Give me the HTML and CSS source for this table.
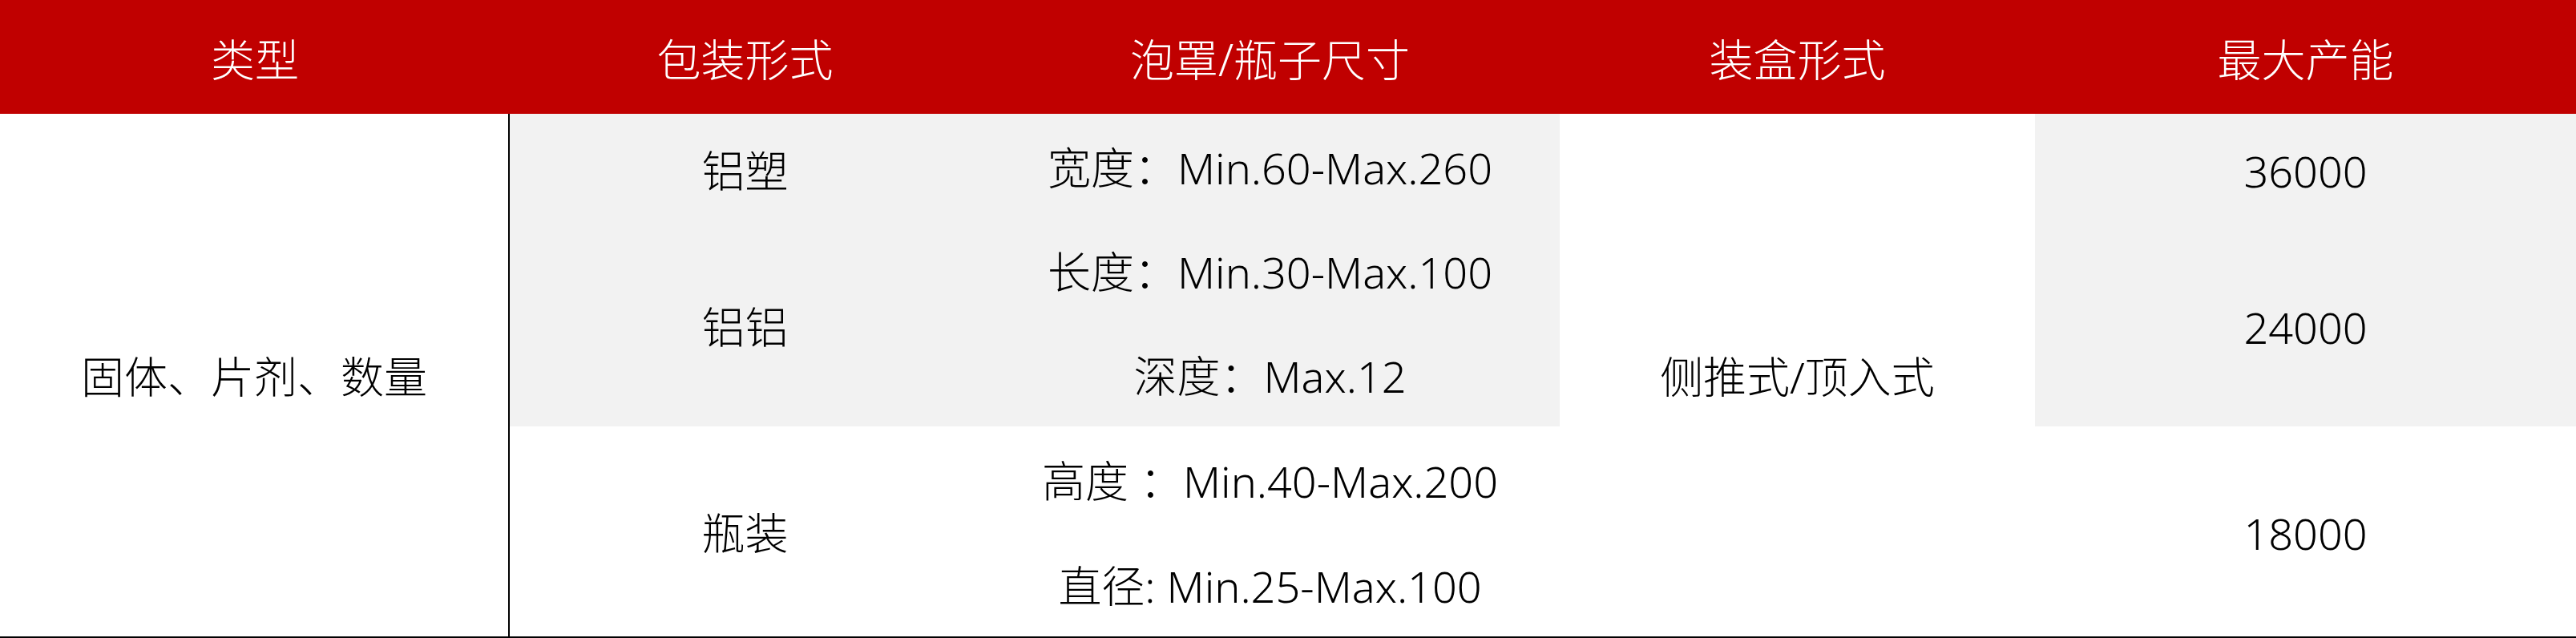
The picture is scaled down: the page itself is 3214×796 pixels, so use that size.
FILE: index.html
```html
<!DOCTYPE html>
<html lang="zh-CN">
<head>
<meta charset="utf-8">
<title>规格表</title>
<link rel="stylesheet" href="styles.css">
</head>
<body>
<div class="table">
  <div class="head">
    <div class="hcell c1">类型</div>
    <div class="hcell c2">包装形式</div>
    <div class="hcell c3">泡罩/瓶子尺寸</div>
    <div class="hcell c4">装盒形式</div>
    <div class="hcell c5">最大产能</div>
  </div>
  <div class="body">
    <div class="col c1 divider">
      <div class="cell full">固体、片剂、数量</div>
    </div>
    <div class="col c2">
      <div class="cell top gray">铝塑</div>
      <div class="cell mid gray">铝铝</div>
      <div class="cell bot">瓶装</div>
    </div>
    <div class="col c3">
      <div class="cell r130 gray">宽度：Min.60-Max.260</div>
      <div class="cell r130 gray">长度：Min.30-Max.100</div>
      <div class="cell r130 gray">深度：Max.12</div>
      <div class="cell r131">高度 ：Min.40-Max.200</div>
      <div class="cell r131">直径: Min.25-Max.100</div>
    </div>
    <div class="col c4">
      <div class="cell full">侧推式/顶入式</div>
    </div>
    <div class="col c5">
      <div class="cell top gray">36000</div>
      <div class="cell mid gray">24000</div>
      <div class="cell bot">18000</div>
    </div>
  </div>
</div>
</body>
</html>
```

FILE: styles.css
```css
html, body {
  margin: 0;
  padding: 0;
  background: #ffffff;
}

.table {
  width: 3214px;
  font-family: "Noto Sans", "Noto Sans CJK SC", sans-serif;
  font-size: 54px;
  font-weight: 300;
  color: #000000;
}

.head {
  display: flex;
  height: 142px;
  background: #c00000;
}

.hcell {
  display: flex;
  align-items: center;
  justify-content: center;
  color: #ffffff;
  font-size: 55px;
}

.c1 { width: 636px; }
.c2 { width: 587px; }
.c3 { width: 723px; }
.c4 { width: 593px; }
.c5 { width: 675px; }

.body {
  display: flex;
  border-bottom: 2px solid #000000;
}

.col {
  display: flex;
  flex-direction: column;
  box-sizing: border-box;
}

.divider {
  border-right: 2px solid #000000;
}

.cell {
  display: flex;
  align-items: center;
  justify-content: center;
  white-space: nowrap;
  line-height: 1;
  padding-top: 4px;
  box-sizing: border-box;
}

.gray { background: #f2f2f2; }

.full { height: 652px; }
.top { height: 138px; }
.mid { height: 252px; }
.bot { height: 262px; }
.r130 { height: 130px; }
.r131 { height: 131px; }
```
